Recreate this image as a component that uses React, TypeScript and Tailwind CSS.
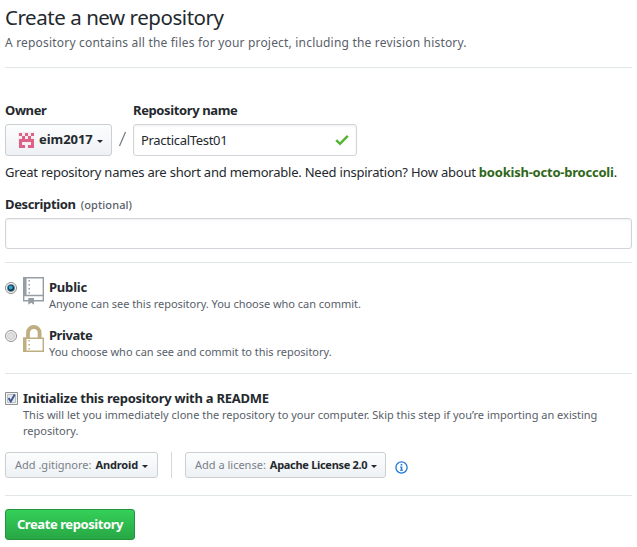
import React from "react";

function Caret() {
  return <span className="mt-[2px] ml-1 inline-block h-0 w-0 border-x-[3px] border-t-[3px] border-x-transparent border-t-[#24292e]" />;
}

const rule = "h-px shrink-0 bg-[#e1e6e6]";
const button =
  "flex items-center rounded-[3px] border border-[#cbcfd3] bg-linear-to-b from-[#fcfdfd] to-[#eef1f4] whitespace-nowrap";

function Identicon() {
  return (
    <svg width="16" height="16" viewBox="0 0 16 16" shapeRendering="crispEdges">
      <rect width="16" height="16" fill="#f6eef1" />
      {["10101", "01010", "11111", "10001", "11011"].map((row, y) =>
        row.split("").map((c, x) =>
          c === "1" ? <rect key={`${y}-${x}`} x={x * 3 + 0.5} y={y * 3 + 0.5} width="3" height="3" fill="#dc6288" /> : null
        )
      )}
    </svg>
  );
}

function Radio({ checked }: { checked?: boolean }) {
  return (
    <svg width="12" height="12" viewBox="0 0 12 12">
      <circle cx="6" cy="6" r="5.5" fill="#f8f8f8" stroke="#8e8f8f" />
      <circle cx="6" cy="6" r="3.6" fill={checked ? "#12384f" : "#dedede"} stroke={checked ? "#6b8594" : "#bfc2c4"} strokeWidth=".7" />
      {checked && <circle cx="5.7" cy="5.6" r="2" fill="#29a4d9" />}
    </svg>
  );
}

export default function App() {
  return (
    <main className="flex h-[547px] w-[637px] flex-col overflow-hidden bg-white pr-[5px] pl-[5px] font-['Noto_Sans','Open_Sans',sans-serif] text-[13px] text-[#24292e]">
      <h1 className="mt-[1px] h-[33px] text-[20.5px] leading-[32px] tracking-[-0.45px] whitespace-nowrap">Create a new repository</h1>
      <p className="h-[18px] text-[12px] leading-[18px] tracking-[0.19px] whitespace-nowrap text-[#586069]">
        A repository contains all the files for your project, including the revision history.
      </p>
      <div className={`${rule} mt-[15px]`} />

      <div className="mt-[32px] flex h-[56px]">
        <div className="w-[107px]">
          <div className="h-[24px] leading-[20px] font-bold tracking-[-0.4px]">Owner</div>
          <button className={`${button} h-[32px] w-[107px] pl-[12px] text-[13px] font-bold`}>
            <Identicon />
            <span className="ml-[5px] tracking-[-0.05px]">eim2017</span>
            <Caret />
          </button>
        </div>
        <svg className="w-[21px]" width="21" height="56" viewBox="0 0 21 56">
          <path d="M7.500 46 13.500 32" fill="none" stroke="#727a82" strokeWidth="1.200" />
        </svg>
        <div className="w-[224px]">
          <div className="h-[24px] leading-[20px] font-bold tracking-[-0.38px] whitespace-nowrap">Repository name</div>
          <div className="flex h-[32px] items-center justify-between rounded-[3px] border border-[#d1d5da] pr-[7px] pl-[7px] shadow-[inset_0_1px_2px_rgba(27,31,35,0.075)]">
            <span className="mt-[1px] tracking-[-0.3px]">PracticalTest01</span>
            <svg width="14" height="12" viewBox="0 0 14 12">
              <path d="M1.2 6.2 5 9.8 12.8 1.8" fill="none" stroke="#55b532" strokeWidth="2.5" />
            </svg>
          </div>
        </div>
      </div>

      <p className="mt-[6px] h-[20px] text-[13px] leading-[20px] tracking-[-0.222px] whitespace-nowrap">
        Great repository names are short and memorable. Need inspiration? How about <b className="text-[#2f6618]">bookish-octo-broccoli</b>.
      </p>
      <div className="mt-[12px] h-[24px] leading-[20px] whitespace-nowrap">
        <b className="tracking-[-0.35px]">Description</b>
        <span className="ml-[5px] text-[11px] font-medium tracking-[0.1px] text-[#586069]">(optional)</span>
      </div>
      <div className="h-[31px] rounded-[3px] border border-[#d1d5da] shadow-[inset_0_1px_2px_rgba(27,31,35,0.075)]" />
      <div className={`${rule} mt-[13px]`} />

      <div className="mt-[14px] flex h-[48px]">
        <div className="w-[18px] pt-[5px]"><Radio checked /></div>
        <svg className="w-[21px]" width="21" height="28" viewBox="0 0 21 28">
          <path d="M.7.7h19.600v23H11M6 23.700H.7V.7m0 17.800h19.600" fill="none" stroke="#959da5" strokeWidth="1.400" />
          <path d="M0 0h3.500v18.500H0zM5.300 21h5.700v6.800l-2.850-2-2.850 2z" fill="#959da5" />
          <path d="M5.500 3H7v1.500H5.500zm0 4H7v1.500H5.500zm0 4H7v1.500H5.500zm0 4H7v1.500H5.500z" fill="#959da5" />
        </svg>
        <div className="ml-[5px] whitespace-nowrap">
          <div className="h-[19px] leading-[20px] font-bold tracking-[-0.2px]">Public</div>
          <div className="text-[11px] leading-[16px] tracking-[-0.03px] text-[#586069]">Anyone can see this repository. You choose who can commit.</div>
        </div>
      </div>
      <div className="flex h-[48px]">
        <div className="w-[18px] pt-[5px]"><Radio /></div>
        <svg className="w-[21px]" width="21" height="28" viewBox="0 0 21 28">
          <path d="M5 13V7.800a5.800 5.800 0 0 1 11.600 0V13" fill="none" stroke="#bfae82" strokeWidth="3.800" />
          <path d="M.7 13.200h19.600v13.100H.7z" fill="#fff" stroke="#bfae82" strokeWidth="1.500" />
          <path d="M0 12.500h3.500V27H0zM5.500 15H7v1.500H5.500zm0 4H7v1.500H5.500zm0 4H7v1.500H5.500z" fill="#bfae82" />
        </svg>
        <div className="ml-[5px] whitespace-nowrap">
          <div className="h-[19px] leading-[20px] font-bold tracking-[-0.45px]">Private</div>
          <div className="text-[11px] leading-[16px] tracking-[-0.02px] text-[#586069]">You choose who can see and commit to this repository.</div>
        </div>
      </div>
      <div className={rule} />

      <div className="mt-[14px] flex h-[64px]">
        <div className="w-[18px] pt-[4px]">
          <svg width="13" height="13" viewBox="0 0 13 13">
            <path d="M.5.5h12v12H.500z" fill="#f4f4f4" stroke="#8e8f8f" />
            <path d="M2.500 2.500h8v8h-8z" fill="#e3e6ea" stroke="#b8bec5" />
            <path d="m3.500 6 2.300 3.500L9.700 2.500" fill="none" stroke="#42578f" strokeWidth="1.900" />
          </svg>
        </div>
        <div className="whitespace-nowrap">
          <div className="h-[19px] leading-[20px] font-bold tracking-[-0.25px]">Initialize this repository with a README</div>
          <div className="text-[11px] leading-[16px] text-[#586069]">
            This will let you immediately clone the repository to your computer. Skip this step if you’re importing an existing
            <br />
            repository.
          </div>
        </div>
      </div>

      <div className="flex h-[26px] items-center text-[11px]">
        <button className={`${button} h-[26px] w-[153px] pl-[9px]`}>
          <span className="mr-[4px] text-[#7a8188]">Add .gitignore:</span><b className="tracking-[-0.15px]">Android</b><Caret />
        </button>
        <div className="ml-[13px] h-[26px] w-px bg-[#d4d7da]" />
        <button className={`${button} ml-[13px] h-[26px] w-[201px] pl-[9px]`}>
          <span className="mr-[4px] text-[#7a8188]">Add a license:</span><b className="tracking-[-0.3px]">Apache License 2.0</b><Caret />
        </button>
        <svg className="mt-[4px] ml-[9px]" width="13" height="13" viewBox="0 0 13 13">
          <circle cx="6.500" cy="6.500" r="5.600" fill="none" stroke="#1f78d8" strokeWidth="1.300" />
          <path d="M5.700 3h1.600v1.500H5.700zM5 5.500h2.300v3.300H8v1H5v-1h.8V6.500H5z" fill="#1f78d8" />
        </svg>
      </div>
      <div className={`${rule} mt-[17px]`} />
      <button className="mt-[13px] h-[31px] w-[130px] shrink-0 rounded-[3px] border border-[#25923c] bg-linear-to-b from-[#34d058] to-[#28a745] pt-[1px] text-[13px] font-bold tracking-[-0.42px] whitespace-nowrap text-white">
        Create repository
      </button>
    </main>
  );
}
